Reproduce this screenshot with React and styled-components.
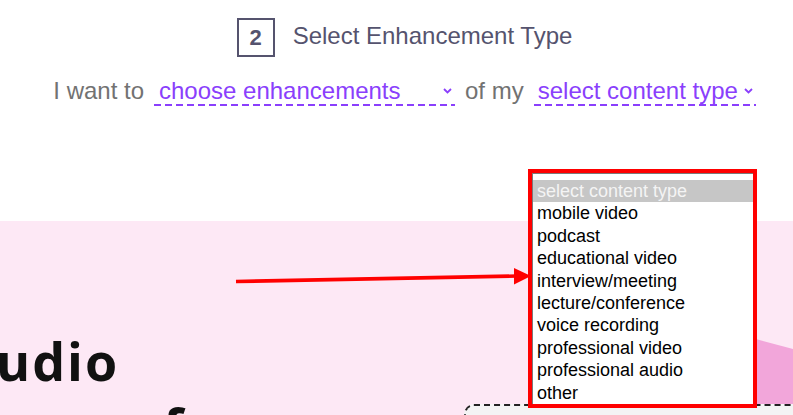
import styled, { createGlobalStyle } from "styled-components";

const GlobalStyle = createGlobalStyle`
  html, body {
    margin: 0;
    padding: 0;
    background: #ffffff;
    font-family: "Liberation Sans", Arial, sans-serif;
  }
`;

const Page = styled.div`
  position: relative;
  width: 793px;
  height: 415px;
  overflow: hidden;
`;

const EnhanceSection = styled.section`
  height: 221px;
  box-sizing: border-box;
  padding: 18px 0 0 16px;
  display: flex;
  flex-direction: column;
  align-items: center;
  gap: 20px;
`;

const StepRow = styled.div`
  display: flex;
  align-items: center;
  gap: 18px;
`;

const StepBadge = styled.div`
  width: 38px;
  height: 39px;
  box-sizing: border-box;
  border: 2px solid #55536e;
  display: flex;
  align-items: center;
  justify-content: center;
  font-size: 22px;
  font-weight: bold;
  color: #55536e;
`;

const StepTitle = styled.h2`
  margin: 0 0 4px;
  font-size: 24px;
  font-weight: normal;
  color: #55536e;
  line-height: 28px;
`;

const Sentence = styled.div`
  display: flex;
  align-items: flex-start;
  gap: 10px;
  font-size: 24px;
  line-height: 27px;
  color: #727272;
`;

const Words = styled.span`
  white-space: nowrap;
`;

const SelectTrigger = styled.div`
  width: ${(p) => p.$width}px;
  box-sizing: border-box;
  padding: 0 3px 2px ${(p) => p.$pad}px;
  display: flex;
  align-items: center;
  justify-content: space-between;
  color: #8a3ffc;
  white-space: nowrap;
  background-image: repeating-linear-gradient(
    to right,
    #8a3ffc 0 7px,
    transparent 7px 11px
  );
  background-size: 100% 2px;
  background-repeat: no-repeat;
  background-position: left bottom;
`;

const Chevron = () => (
  <svg width="9" height="6" viewBox="0 0 9 6">
    <polyline
      points="1,1 4.5,4.5 8,1"
      fill="none"
      stroke="#8a3ffc"
      strokeWidth="1.8"
    />
  </svg>
);

const Hero = styled.section`
  position: relative;
  height: 194px;
  background: #fde8f5;
  display: grid;
  grid-template-columns: 464px 1fr;
  overflow: hidden;
`;

const HeroShape = styled.svg`
  position: absolute;
  left: 0;
  top: 0;
`;

const Heading = styled.h1`
  position: relative;
  margin: 107px 0 0 -4px;
  font-family: "Open Sans", "Noto Sans", sans-serif;
  font-size: 52px;
  line-height: 66px;
  font-weight: 700;
  letter-spacing: 2px;
  word-spacing: -10px;
  color: #111111;
  white-space: nowrap;
`;

const UploadCard = styled.div`
  position: relative;
  margin-top: 183px;
  height: 200px;
  margin-right: -20px;
  border: 2px dashed #222222;
  border-radius: 10px;
  background: #f4f4f4;
`;

const ListboxFrame = styled.div`
  position: absolute;
  left: 528px;
  top: 169px;
  width: 229px;
  height: 239px;
  box-sizing: border-box;
  border: 4px solid #ff0000;
  background: #ffffff;
`;

const Listbox = styled.ul`
  margin: 0;
  height: 100%;
  box-sizing: border-box;
  padding: 6px 0 0;
  list-style: none;
  border-left: 1px solid #7a7a7a;
  border-top: 1px solid #7a7a7a;
  font-size: 18px;
  line-height: 22.4px;
`;

const Option = styled.li`
  padding-left: 4px;
  white-space: nowrap;
  color: ${(p) => (p.$selected ? "#f4f4f4" : "#000000")};
  background: ${(p) => (p.$selected ? "#c6c6c6" : "transparent")};
`;

const Arrow = styled.svg`
  position: absolute;
  left: 0;
  top: 0;
  pointer-events: none;
`;

const contentTypes = [
  "select content type",
  "mobile video",
  "podcast",
  "educational video",
  "interview/meeting",
  "lecture/conference",
  "voice recording",
  "professional video",
  "professional audio",
  "other",
];

export default function App() {
  return (
    <>
      <GlobalStyle />
      <Page>
        <EnhanceSection>
          <StepRow>
            <StepBadge>2</StepBadge>
            <StepTitle>Select Enhancement Type</StepTitle>
          </StepRow>
          <Sentence>
            <Words>I want to</Words>
            <SelectTrigger $width={301} $pad={5}>
              choose enhancements
              <Chevron />
            </SelectTrigger>
            <Words>of my</Words>
            <SelectTrigger $width={222} $pad={4}>
              select content type
              <Chevron />
            </SelectTrigger>
          </Sentence>
        </EnhanceSection>

        <Hero>
          <HeroShape width="793" height="194" viewBox="0 0 793 194">
            <polygon points="600,76 793,128 793,194 640,194" fill="#f2a6da" />
          </HeroShape>
          <Heading>
            udio
            <br />
            crews for
          </Heading>
          <div>
            <UploadCard />
          </div>
        </Hero>

        <ListboxFrame>
          <Listbox>
            {contentTypes.map((t, i) => (
              <Option key={t} $selected={i === 0}>
                {t}
              </Option>
            ))}
          </Listbox>
        </ListboxFrame>

        <Arrow width="793" height="415" viewBox="0 0 793 415">
          <line
            x1="236"
            y1="281.5"
            x2="517"
            y2="276"
            stroke="#ff0000"
            strokeWidth="3.6"
          />
          <polygon points="514,268 531,276 514,284.5" fill="#ff0000" />
        </Arrow>
      </Page>
    </>
  );
}
